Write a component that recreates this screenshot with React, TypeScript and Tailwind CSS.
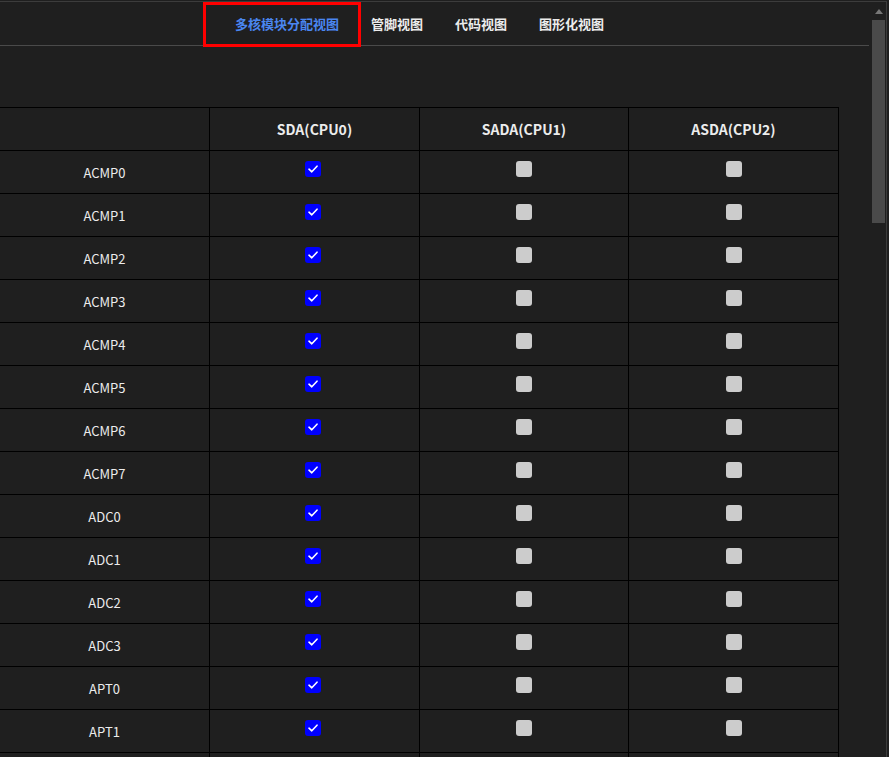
import React from "react";

const rows = [
  "ACMP0","ACMP1","ACMP2","ACMP3","ACMP4","ACMP5","ACMP6","ACMP7",
  "ADC0","ADC1","ADC2","ADC3","APT0","APT1",
];

const font = { fontFamily: '"Noto Sans CJK SC", "Noto Sans", sans-serif' };

function Checked() {
  return (
    <div className="w-4 h-4 rounded-[3px] bg-[#0000ff] flex items-center justify-center">
      <svg width="10" height="8" viewBox="0 0 10 8" fill="none">
        <path d="M1 4.2 L3.8 6.8 L9 1.2" stroke="white" strokeWidth="1.6" strokeLinecap="round" strokeLinejoin="round" />
      </svg>
    </div>
  );
}

function Unchecked() {
  return <div className="w-4 h-4 rounded-[3px] bg-[#cccccc]" />;
}

export default function App() {
  return (
    <div className="w-[889px] h-[757px] overflow-hidden bg-[#1f1f1f] text-[#ececec] pt-px" style={font}>
      <div className="w-[887px] h-[760px] border-t border-r border-[#3c3c3c] flex">
        <div className="w-[869px] flex flex-col">
          <div className="relative shrink-0 h-[44px] border-b border-[#4a4a4a] flex items-center pl-[219px] text-[13px] font-bold">
            <div className="px-4 text-[#4a86f0]">多核模块分配视图</div>
            <div className="px-4">管脚视图</div>
            <div className="px-4">代码视图</div>
            <div className="px-4">图形化视图</div>
            <div className="absolute left-[203px] top-0 w-[158px] h-[45px] border-[3px] border-[#ff0000]" />
          </div>
          <div className="shrink-0 h-[61px]" />
          <div className="shrink-0 w-[839px] grid grid-cols-[210px_210px_209px_210px] border-t border-black text-[13px]">
            <div className="h-[43px] border-r border-b border-black" />
            <div className="h-[43px] border-r border-b border-black flex items-center justify-center font-bold text-[14px]">SDA(CPU0)</div>
            <div className="h-[43px] border-r border-b border-black flex items-center justify-center font-bold text-[14px]">SADA(CPU1)</div>
            <div className="h-[43px] border-r border-b border-black flex items-center justify-center font-bold text-[14px]">ASDA(CPU2)</div>
            {rows.map((r) => (
              <React.Fragment key={r}>
                <div className="h-[43px] border-r border-b border-black flex items-center justify-center pt-px">{r}</div>
                <div className="h-[43px] border-r border-b border-black flex items-center justify-center pb-[6px] pr-[3px]"><Checked /></div>
                <div className="h-[43px] border-r border-b border-black flex items-center justify-center pb-[6px]"><Unchecked /></div>
                <div className="h-[43px] border-r border-b border-black flex items-center justify-center pb-[6px]"><Unchecked /></div>
              </React.Fragment>
            ))}
            <div className="h-[43px] border-r border-b border-black" />
            <div className="h-[43px] border-r border-b border-black" />
            <div className="h-[43px] border-r border-b border-black" />
            <div className="h-[43px] border-r border-b border-black" />
          </div>
        </div>
        <div className="w-[17px] flex flex-col items-center">
          <div className="h-[18px] flex items-center justify-center pl-[2px]">
            <svg width="8" height="5" viewBox="0 0 8 5"><path d="M0 5 L4 0 L8 5 Z" fill="#777777" /></svg>
          </div>
          <div className="w-[13px] h-[203px] bg-[#4a4a4a] ml-[2px]" />
        </div>
      </div>
    </div>
  );
}
